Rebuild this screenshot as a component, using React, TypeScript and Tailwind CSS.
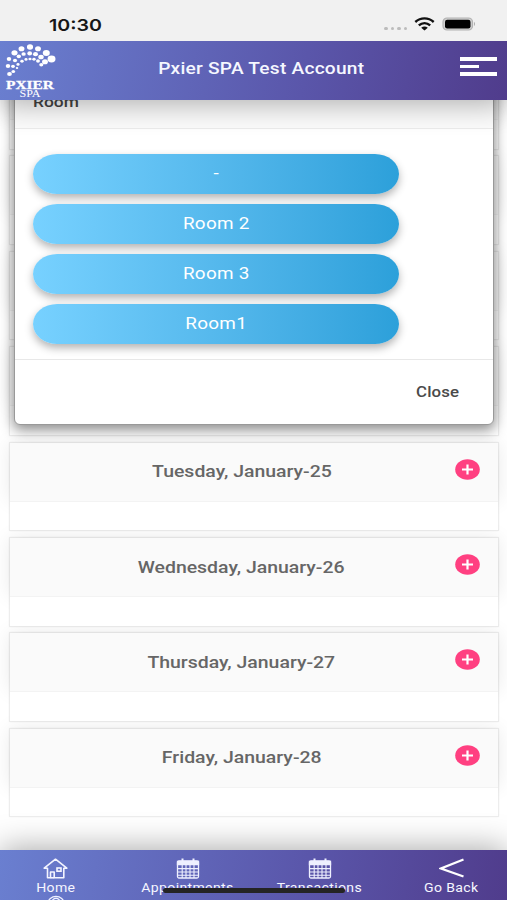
import type { ReactNode } from "react";

const days = [
  "",
  "",
  "",
  "",
  "Tuesday, January-25",
  "Wednesday, January-26",
  "Thursday, January-27",
  "Friday, January-28",
];

const rooms = ["-", "Room 2", "Room 3", "Room1"];

const logoDots: [number, number, number][] = [
  [9.5, 74, 2.1], [8, 66, 2], [9, 59, 2], [14.5, 52.8, 2.7], [21.5, 48.7, 2.6], [30, 47, 2.7], [38, 48.8, 2.6], [46.3, 53, 3.1], [51.5, 59, 3.5],
  [13.3, 71.5, 1.6], [13, 66.3, 1.7], [15, 60.5, 1.8], [18.8, 56.3, 1.9], [23.6, 54, 1.9], [29.7, 53.4, 2.1], [35.5, 54.2, 2.2], [41, 57, 2.4], [45, 61.7, 2.6],
  [17, 68, 1.1], [18, 64.4, 1.4], [22, 61.2, 1.5], [26, 59.4, 1.4], [30, 59, 1.4], [34, 59.3, 1.5], [38, 61, 1.7], [41.3, 64.8, 1.8],
];

function StatusBar() {
  return (
    <div className="relative z-30 flex h-[41px] shrink-0 items-start justify-between bg-[#f1f1f1] pl-[49px] pr-[31px]">
      <span className="mt-[12.5px] inline-block origin-left scale-x-[1.19] font-[Inter] text-[16.5px] leading-6 font-semibold text-[#161616]">
        10:30
      </span>
      <div className="flex items-center pt-[15px]">
        <div className="mt-[9px] flex gap-[3px]">
          {[0, 1, 2, 3].map((i) => (
            <i key={i} className="h-[3px] w-[3.5px] rounded-full bg-[#bcbcbc]" />
          ))}
        </div>
        <svg className="ml-[7px]" width="21" height="17" viewBox="0 0 21 17" fill="none" stroke="#111" strokeWidth="2.4">
          <path d="M1.3 7C6.7 2.2 14.3 2.2 19.7 7" />
          <path d="M4.8 10.4C8.2 7.4 12.8 7.4 16.2 10.4" />
          <path d="M7.2 12.7C9.3 11.1 11.7 11.1 13.8 12.7L10.5 15.4Z" fill="#111" stroke="none" />
        </svg>
        <svg className="ml-[7px]" width="34" height="17" viewBox="0 0 34 17">
          <rect x="1" y="3" width="29.5" height="12" rx="4" fill="#d0d0d0" stroke="#b2b2b2" strokeWidth="1.2" />
          <rect x="3" y="4.7" width="25.5" height="8.8" rx="2.2" fill="#000" />
          <path d="M32 6.8Q34 9 32 11.2Z" fill="#aaa" />
        </svg>
      </div>
    </div>
  );
}

function Logo() {
  return (
    <svg width="60" height="59" viewBox="0 41 60 59" fill="#fff">
      {logoDots.map(([x, y, r]) => (
        <ellipse key={`${x}-${y}`} cx={x} cy={y} rx={r * 1.14} ry={r * 0.98} />
      ))}
      <text x="6" y="89" fontFamily="Liberation Serif, serif" fontWeight="700" fontSize="12.8" stroke="#fff" strokeWidth="0.3" textLength="48" lengthAdjust="spacingAndGlyphs">
        PXIER
      </text>
      <text x="19.5" y="97.3" fontFamily="Liberation Serif, serif" fontSize="10" textLength="21" lengthAdjust="spacingAndGlyphs">
        SPA
      </text>
    </svg>
  );
}

function DayCard({ label }: { label: string }) {
  return (
    <div className="flex h-[89.6px] shrink-0 flex-col border border-[#ededed] bg-white shadow-[0_0_2px_rgba(0,0,0,0.05)]">
      <div className="flex h-[58px] shrink-0 items-center bg-[#fafafa] pr-[18px] shadow-[0_0_20px_rgba(0,0,0,0.09)]">
        {label && (
          <>
            <div className="flex-1 pt-px pl-[18px] text-center">
              <span className="inline-block scale-x-[1.215] text-[16px] font-medium text-[#666]">{label}</span>
            </div>
            <svg className="mb-[5px]" width="25" height="21" viewBox="0 0 25 21">
              <ellipse cx="12.5" cy="10.5" rx="12.3" ry="10.3" fill="#ff4081" />
              <path d="M7 10.5H18M12.5 5.6V15.4" stroke="#fff" strokeWidth="2.2" />
            </svg>
          </>
        )}
      </div>
      <div className="relative flex-1 border-t border-[#f3f3f3] bg-white" />
    </div>
  );
}

function RoomDialog() {
  return (
    <div className="absolute top-[-30px] left-[14px] flex h-[355px] w-[480px] flex-col rounded-md border border-[#999] bg-white shadow-[0_4px_13px_1px_rgba(0,0,0,0.45)]">
      <div className="h-[58px] border-b border-[#ececec] bg-[#fcfcfc] pt-[19px] pl-[18px]">
        <span className="inline-block origin-left scale-x-[1.16] text-[15px] leading-5 font-medium text-[#444]">Room</span>
      </div>
      <div className="flex h-[231px] flex-col gap-[10px] border-b border-[#e8e8e8] pt-[25px] pl-[18px]">
        {rooms.map((room) => (
          <button
            key={room}
            className="flex h-[40px] w-[366px] shrink-0 items-center justify-center rounded-[24px/20px] bg-linear-to-r from-[#77d1ff] to-[#2ca0da] shadow-[0_4px_8px_rgba(0,0,0,0.3)]"
          >
            <span className="inline-block scale-x-[1.18] text-[16px] leading-5 tracking-[0.25px] text-white">{room}</span>
          </button>
        ))}
      </div>
      <div className="flex h-[64px] items-center justify-end pt-px pr-[37px]">
        <span className="inline-block scale-x-[1.16] text-[14.5px] font-medium tracking-[0.1px] text-[#4a4a4a]">Close</span>
      </div>
    </div>
  );
}

function CalendarIcon() {
  return (
    <svg width="24" height="21" viewBox="0 0 24 21" fill="none" stroke="#eef0ff" strokeWidth="1.3">
      <rect x="1.5" y="3" width="21" height="17" rx="1.5" />
      <path d="M1.5 3.5H22.5V6.5H1.5Z" fill="#eef0ff" />
      <path d="M2 10.6H22M2 14H22M2 17.2H22M6.2 7V20M10 7V20M14 7V20M18 7V20" strokeWidth="1.1" />
      <path d="M6.5 0.5V4.5M17.5 0.5V4.5" strokeWidth="2" />
    </svg>
  );
}

function HomeIcon() {
  return (
    <svg width="25" height="21" viewBox="0 0 25 21" fill="none" stroke="#f4f5ff" strokeWidth="1.6">
      <path d="M4.5 10.2H1.2L12.5 1.2L23.8 10.2H20.8V19.8H11.2V14H7.5V19.8H4.5Z" strokeLinejoin="round" />
      <path d="M7.5 19.8H11.2" />
      <rect x="14" y="10" width="4" height="3.2" />
    </svg>
  );
}

function NavItem({ label, children }: { label: string; children: ReactNode }) {
  return (
    <div className="flex flex-1 flex-col items-center pt-[8px]">
      <div className="flex h-[21px] items-center">{children}</div>
      <span className="mt-px inline-block scale-x-[1.17] text-[12px] leading-[17px] tracking-[0.3px] whitespace-nowrap text-[#f5f6ff]">
        {label}
      </span>
    </div>
  );
}

export default function App() {
  return (
    <div className="relative flex h-[900px] w-[507px] flex-col overflow-hidden bg-white font-[Roboto,sans-serif]">
      <StatusBar />
      <header className="relative z-20 flex h-[59px] shrink-0 items-center bg-linear-[100deg,#6a7fd0,#5a56aa_60%,#503c8c] shadow-[0_4px_30px_rgba(0,0,0,0.32)]">
        <Logo />
        <div className="flex-1 pr-[2px] pb-[3px] pl-[5px] text-center">
          <span className="inline-block scale-x-[1.195] text-[16px] font-medium tracking-[0.2px] text-[#f5f7ff]">
            Pxier SPA Test Account
          </span>
        </div>
        <div className="mr-[10px] mb-[8px] flex w-[37px] flex-col gap-[4px]">
          <i className="h-[3.5px] bg-white" />
          <i className="h-[3.5px] w-[18.5px] bg-white" />
          <i className="h-[3.5px] bg-white" />
        </div>
      </header>
      <main className="relative h-[750px] shrink-0">
        <div className="flex h-full flex-col justify-end gap-[5.8px] overflow-hidden pr-[8px] pb-[32.6px] pl-[9px]">
          {days.map((day, i) => (
            <DayCard key={i} label={day} />
          ))}
        </div>
        <RoomDialog />
      </main>
      <footer className="relative z-20 h-[50px] shrink-0 bg-linear-[100deg,#6a7fd0,#5a56aa_60%,#503c8c] shadow-[0_-2px_32px_rgba(0,0,0,0.34)]">
        <nav className="-mx-[10.5px] flex h-full">
          <NavItem label="Home"><HomeIcon /></NavItem>
          <NavItem label="Appointments"><CalendarIcon /></NavItem>
          <NavItem label="Transactions"><CalendarIcon /></NavItem>
          <NavItem label="Go Back">
            <svg width="25" height="21" viewBox="0 0 25 21" fill="none" stroke="#fff" strokeWidth="2.2">
              <path d="M24.5 1.5L2 10.5L24.5 18.5" />
            </svg>
          </NavItem>
        </nav>
        <svg className="absolute top-[45px] left-[46px]" width="20" height="5" viewBox="0 0 20 5" fill="none" stroke="#eef0ff" strokeWidth="1.3">
          <ellipse cx="10" cy="8.5" rx="8" ry="7.2" />
          <path d="M6.5 5Q10 1.5 13.5 5" />
        </svg>
        <div className="absolute top-[37.5px] left-[163px] h-[5px] w-[182px] rounded-full bg-[#242424]" />
      </footer>
    </div>
  );
}
